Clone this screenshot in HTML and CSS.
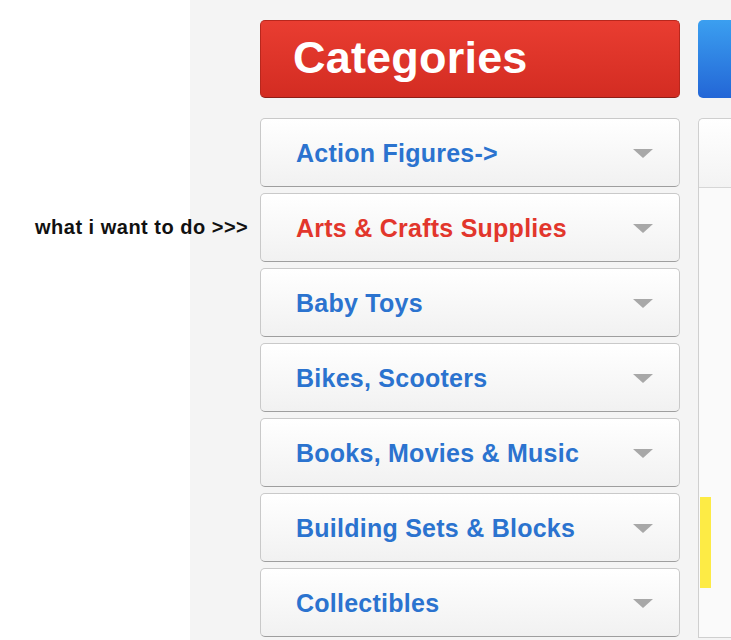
FILE: index.html
```html
<!DOCTYPE html>
<html>
<head>
<meta charset="utf-8">
<link rel="stylesheet" href="styles.css">
</head>
<body>
<div class="page">
  <div class="margin"></div>
  <div class="content">
    <div class="sidebar">
      <div class="sidebar-head">Categories</div>
      <ul class="cat-list">
        <li class="cat"><span class="cat-name">Action Figures-&gt;</span><span class="arrow"></span></li>
        <li class="cat"><span class="cat-name cat-name--active">Arts &amp; Crafts Supplies</span><span class="arrow"></span></li>
        <li class="cat"><span class="cat-name">Baby Toys</span><span class="arrow"></span></li>
        <li class="cat"><span class="cat-name">Bikes, Scooters</span><span class="arrow"></span></li>
        <li class="cat"><span class="cat-name">Books, Movies &amp; Music</span><span class="arrow"></span></li>
        <li class="cat"><span class="cat-name">Building Sets &amp; Blocks</span><span class="arrow"></span></li>
        <li class="cat"><span class="cat-name">Collectibles</span><span class="arrow"></span></li>
      </ul>
    </div>
    <div class="main">
      <div class="main-head"></div>
      <div class="main-panel">
        <div class="panel-top"></div>
        <div class="panel-body">
          <div class="yellow"></div>
        </div>
      </div>
    </div>
  </div>
  <div class="note">what i want to do &gt;&gt;&gt;</div>
</div>
</body>
</html>
```

FILE: styles.css
```css
* { box-sizing: border-box; }
html, body {
  margin: 0;
  padding: 0;
  background: #ffffff;
  font-family: "Liberation Sans", Arial, sans-serif;
  overflow: hidden;
}
.page {
  position: relative;
  display: flex;
  width: 731px;
  height: 640px;
  overflow: hidden;
}
.margin {
  width: 190px;
  flex: none;
  background: #ffffff;
}
.content {
  flex: 1;
  background: #f4f4f4;
  display: flex;
  gap: 18px;
  padding: 20px 0 0 70px;
  min-width: 0;
}
.sidebar {
  width: 420px;
  flex: none;
}
.sidebar-head {
  height: 78px;
  border-radius: 5px;
  background: linear-gradient(#e93d31, #d32c22);
  border: 1px solid #b8271d;
  border-bottom-color: #8e1e17;
  color: #ffffff;
  font-weight: bold;
  font-size: 45px;
  line-height: 74px;
  padding-left: 32px;
  letter-spacing: 0.2px;
}
.cat-list {
  list-style: none;
  margin: 20px 0 0;
  padding: 0;
  display: flex;
  flex-direction: column;
  gap: 6px;
}
.cat {
  height: 69px;
  border: 1px solid #c9c9c9;
  border-bottom-color: #9e9e9e;
  border-radius: 5px;
  background: linear-gradient(#ffffff, #f1f1f1);
  display: flex;
  align-items: center;
  justify-content: space-between;
  padding: 0 26px 0 35px;
}
.cat-name {
  color: #2b73cf;
  font-weight: bold;
  font-size: 25px;
  line-height: 30px;
  letter-spacing: 0.25px;
}
.cat-name--active {
  color: #e2362c;
}
.arrow {
  width: 0;
  height: 0;
  border-left: 10px solid transparent;
  border-right: 10px solid transparent;
  border-top: 9px solid #a8a8a8;
  margin-top: 2px;
}
.main {
  flex: none;
  width: 60px;
}
.main-head {
  height: 78px;
  border-radius: 5px;
  background: linear-gradient(#3b9ff0, #2366d6);
}
.main-panel {
  margin-top: 20px;
  height: 520px;
  background: #fafafa;
  border: 1px solid #cfcfcf;
  border-right: none;
  border-radius: 5px 0 0 0;
}
.panel-top {
  height: 69px;
  background: linear-gradient(#ffffff, #f3f3f3);
  border-bottom: 1px solid #d6d6d6;
  border-radius: 5px 0 0 0;
}
.panel-body {
  padding: 309px 0 0 1px;
}
.yellow {
  width: 11px;
  height: 91px;
  background: #fdeb45;
}
.note {
  position: absolute;
  left: 35px;
  top: 215px;
  font-weight: bold;
  font-size: 20px;
  line-height: 24px;
  letter-spacing: 0.5px;
  color: #111111;
  white-space: nowrap;
}
```
